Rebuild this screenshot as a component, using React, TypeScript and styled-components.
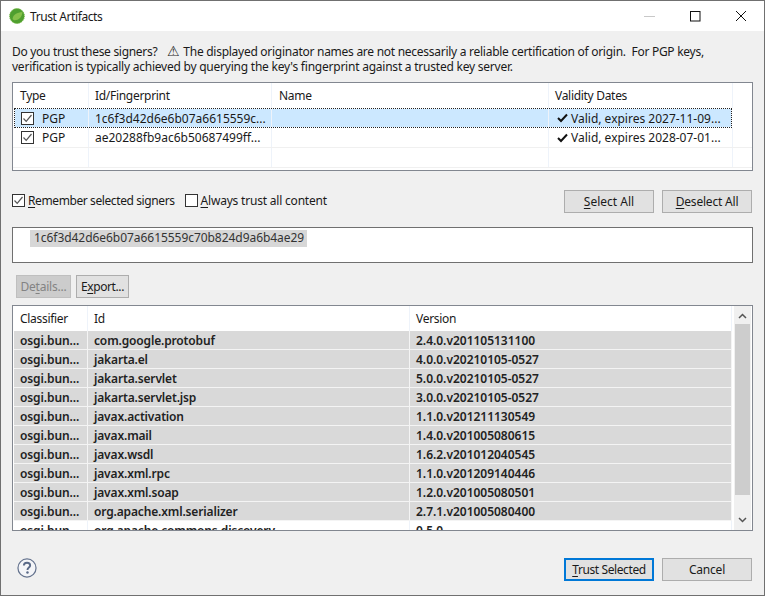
import React from "react";
import styled, { createGlobalStyle, css } from "styled-components";

const Global = createGlobalStyle`
  html, body { margin: 0; padding: 0; background: #f0f0f0; }
  body { font-family: "Noto Sans", "Open Sans", sans-serif; font-size: 12px; color: #1a1a1a; }
  #root { width: 765px; height: 596px; }
  u { text-underline-offset: 2px; }
`;

const Win = styled.div`
  box-sizing: border-box; width: 765px; height: 596px;
  border: 1px solid #707070; background: #f0f0f0;
  display: flex; flex-direction: column; overflow: hidden;
`;
const TitleBar = styled.div`
  height: 30px; background: #fff; display: flex; align-items: center; flex: none;
  padding-left: 8px;
`;
const TitleText = styled.span`
  font-size: 12px; margin-left: 5px; letter-spacing: -0.4px; flex: 1;
`;
const WinBtn = styled.div`
  width: 46px; height: 30px; display: flex; align-items: center; justify-content: center; flex: none;
`;
const Body = styled.div`
  flex: 1; display: flex; flex-direction: column; padding: 12px 11px 0 11px; min-height: 0;
`;
const Intro = styled.div`
  line-height: 15px; height: 30px; white-space: pre; margin-top: 1px;
`;
const Lead = styled.span`letter-spacing: -0.3px; margin-right: 10px;`;
const Warn = styled.span`margin-right: 3px; font-size: 14px; line-height: 14px;`;
const Spaced = styled.span<{ $s: number }>`letter-spacing: ${p => p.$s}px;`;
const Table = styled.div<{ $h: number; $mt?: number }>`
  box-sizing: border-box; height: ${p => p.$h}px; margin-top: ${p => p.$mt ?? 7}px; border: 1px solid #828790;
  background: #fff; overflow: hidden; display: flex; flex-direction: column; flex: none;
`;
const Row = styled.div<{ $cols: string; $h: number; $gray?: boolean; $line?: boolean; $bold?: boolean; $head?: boolean }>`
  display: grid; grid-template-columns: ${p => p.$cols}; height: ${p => p.$h}px; flex: none;
  box-sizing: border-box;
  ${p => p.$line && css`border-bottom: 1px solid #f0f0f0;`}
  ${p => p.$gray && css`background: #d9d9d9; border-bottom: 1px solid #f4f4f4;`}
  ${p => p.$bold && css`font-weight: 600; color: #222;`}
  ${p => p.$head && css`letter-spacing: -0.3px;`}
`;
const SelectedRow = styled(Row)`
  background: #cce8ff; outline: 1px dotted #222; outline-offset: 0; margin: 1px 21px 1px 2px;
`;
const Cell = styled.div<{ $pad?: number; $gap?: number; $divider?: string; $s?: number }>`
  box-sizing: border-box; padding-left: ${p => p.$pad ?? 6}px; gap: ${p => p.$gap ?? 0}px;
  white-space: nowrap; overflow: hidden; display: flex; align-items: center;
  border-right: 1px solid ${p => p.$divider ?? "#eef3fa"};
  ${p => p.$s !== undefined && css`letter-spacing: ${p.$s}px;`}
`;
const Tick = styled.span`
  box-sizing: border-box; width: 13px; height: 13px; border: 1px solid #333; background: #fff;
  display: inline-flex; align-items: center; justify-content: center; flex: none;
`;
const CheckRow = styled.div`
  display: flex; align-items: center; height: 23px; margin-top: 19px; padding-right: 1px;
`;
const CheckLabel = styled.label<{ $s: number; $mr?: number }>`
  display: flex; align-items: center; gap: 3px; margin: -2px ${p => p.$mr ?? 0}px 0 0; letter-spacing: ${p => p.$s}px;
`;
const Spacer = styled.div`flex: 1;`;
const Btn = styled.div<{ $w?: number; $s?: number; $focus?: boolean; $disabled?: boolean }>`
  box-sizing: border-box; width: ${p => p.$w ?? 90}px; height: 23px; display: flex; align-items: center; justify-content: center;
  background: #e1e1e1; border: 1px solid #adadad; flex: none; letter-spacing: ${p => p.$s ?? 0}px;
  ${p => p.$focus && css`border: 2px solid #0078d7;`}
  ${p => p.$disabled && css`background: #cccccc; border-color: #bfbfbf; color: #838383;`}
`;
const BtnGap = styled.div`width: 8px; flex: none;`;
const DetailBox = styled.div`
  box-sizing: border-box; height: 36px; margin-top: 14px; background: #fff; border: 1px solid #707070;
  padding: 1px 0 0 17px; flex: none;
`;
const Selected = styled.span`
  display: inline-block; background: #d7d7d7; height: 17px; line-height: 15px; padding: 0 3px 0 4px; color: #333; letter-spacing: -0.05px;
`;
const SmallBtns = styled.div`display: flex; gap: 5px; margin-top: 12px; padding-left: 4px; flex: none;`;
const ListWrap = styled.div`display: flex; height: 100%; min-height: 0;`;
const ListCol = styled.div`width: 718px; margin-left: 1px; overflow: hidden; flex: none;`;
const Scroll = styled.div`
  width: 17px; margin: 0 1px 0 auto; background: #f0f0f0; display: flex; flex-direction: column; flex: none;
`;
const ScrollArrow = styled.div<{ $h: number; $pt?: number }>`
  box-sizing: border-box; height: ${p => p.$h}px; padding-top: ${p => p.$pt ?? 7}px; display: flex; justify-content: center; flex: none;
`;
const Thumb = styled.div`flex: 1; margin: 0 1px; background: #cdcdcd;`;
const Footer = styled.div`
  display: flex; align-items: center; margin-top: 27px; height: 23px; padding: 0 1px 0 5px; flex: none;
`;
const HelpIcon = styled.svg`margin-top: -3px; flex: none;`;
const ValidIcon = styled.svg`margin-right: 3px; flex: none;`;

const Check = () => (
  <svg width="11" height="11" viewBox="0 0 11 11"><path d="M1.5 5.5 L4.2 8.4 L9.5 2" fill="none" stroke="#555" strokeWidth="1.2" /></svg>
);
const Box = ({ on }: { on?: boolean }) => <Tick>{on && <Check />}</Tick>;
const Valid = () => (
  <ValidIcon width="11" height="10" viewBox="0 0 11 10"><path d="M1 5 L4 8 L10 1.5" fill="none" stroke="#111" strokeWidth="2" /></ValidIcon>
);

const c1 = "76px 183px 277px 184px 1fr";
const c1Sel = "74px 183px 277px 183px";
const c2 = "74px 322px 322px";

const rows = [
  ["com.google.protobuf", "2.4.0.v201105131100"],
  ["jakarta.el", "4.0.0.v20210105-0527"],
  ["jakarta.servlet", "5.0.0.v20210105-0527"],
  ["jakarta.servlet.jsp", "3.0.0.v20210105-0527"],
  ["javax.activation", "1.1.0.v201211130549"],
  ["javax.mail", "1.4.0.v201005080615"],
  ["javax.wsdl", "1.6.2.v201012040545"],
  ["javax.xml.rpc", "1.1.0.v201209140446"],
  ["javax.xml.soap", "1.2.0.v201005080501"],
  ["org.apache.xml.serializer", "2.7.1.v201005080400"],
];

export default function App() {
  return (
    <Win>
      <Global />
      <TitleBar>
        <svg width="16" height="16" viewBox="0 0 16 16">
          <circle cx="8" cy="8" r="7.4" fill="#4f9f2f" stroke="#6db33f" strokeWidth="1" strokeDasharray="1.2 0.8" />
          <path d="M3.5 11 C4 6.5 8 4.5 13.5 4 C13 9.5 9.5 12.5 5 12.2 Z" fill="#86c04a" />
        </svg>
        <TitleText>Trust Artifacts</TitleText>
        <WinBtn><svg width="11" height="1"><rect width="11" height="1" fill="#c8c8c8" /></svg></WinBtn>
        <WinBtn><svg width="11" height="11"><rect x="0.5" y="0.5" width="9.5" height="9.5" fill="none" stroke="#111" /></svg></WinBtn>
        <WinBtn><svg width="12" height="12"><path d="M1 1 L11 11 M11 1 L1 11" stroke="#111" /></svg></WinBtn>
      </TitleBar>
      <Body>
        <Intro>
          <Lead>Do you trust these signers?</Lead>
          <Warn>⚠</Warn>
          <Spaced $s={-0.27}>{"The displayed originator names are not necessarily a reliable certification of origin.  For PGP keys,"}</Spaced>
          {"\n"}
          <Spaced $s={-0.23}>{"verification is typically achieved by querying the key's fingerprint against a trusted key server."}</Spaced>
        </Intro>
        <Table $h={89} $mt={8}>
          <Row $cols={c1} $h={25} $head>
            <Cell $pad={7}>Type</Cell><Cell>Id/Fingerprint</Cell><Cell $pad={7}>Name</Cell><Cell>Validity Dates</Cell><Cell $divider="transparent" />
          </Row>
          <SelectedRow $cols={c1Sel} $h={18}>
            <Cell $pad={6} $gap={8}><Box on />PGP</Cell>
            <Cell>1c6f3d42d6e6b07a6615559c...</Cell><Cell /><Cell $pad={8}><Valid />Valid, expires 2027-11-09...</Cell>
          </SelectedRow>
          <Row $cols={c1} $h={20} $line>
            <Cell $pad={8} $gap={8}><Box on />PGP</Cell>
            <Cell>ae20288fb9ac6b50687499ff...</Cell><Cell /><Cell $pad={8}><Valid />Valid, expires 2028-07-01...</Cell><Cell $divider="transparent" />
          </Row>
          <Row $cols={c1} $h={20} $line>
            <Cell /><Cell /><Cell /><Cell /><Cell $divider="transparent" />
          </Row>
        </Table>
        <CheckRow>
          <CheckLabel $s={-0.4} $mr={10}><Box on /><span><u>R</u>emember selected signers</span></CheckLabel>
          <CheckLabel $s={-0.2}><Box /><span><u>A</u>lways trust all content</span></CheckLabel>
          <Spacer />
          <Btn><span><u>S</u>elect All</span></Btn>
          <BtnGap />
          <Btn $s={-0.2}><span><u>D</u>eselect All</span></Btn>
        </CheckRow>
        <DetailBox><Selected>1c6f3d42d6e6b07a6615559c70b824d9a6b4ae29</Selected></DetailBox>
        <SmallBtns>
          <Btn $w={55} $s={-0.2} $disabled><span>De<u>t</u>ails...</span></Btn>
          <Btn $w={53} $s={-0.4}><span>E<u>x</u>port...</span></Btn>
        </SmallBtns>
        <Table $h={226}>
          <ListWrap>
            <ListCol>
              <Row $cols={c2} $h={25} $head>
                <Cell>Classifier</Cell><Cell>Id</Cell><Cell>Version</Cell>
              </Row>
              {rows.map(([id, v]) => (
                <Row key={id} $cols={c2} $h={19} $gray $bold>
                  <Cell $divider="#f4f4f4" $s={-0.1}>osgi.bun...</Cell>
                  <Cell $divider="#f4f4f4" $s={-0.15}>{id}</Cell>
                  <Cell $divider="#f4f4f4" $s={-0.02}>{v}</Cell>
                </Row>
              ))}
              <Row $cols={c2} $h={19} $bold>
                <Cell $s={-0.1}>osgi.bun...</Cell><Cell $s={-0.15}>org.apache.commons.discovery</Cell><Cell>0.5.0</Cell>
              </Row>
            </ListCol>
            <Scroll>
              <ScrollArrow $h={18}><svg width="9" height="6"><path d="M1 5 L4.5 1.5 L8 5" fill="none" stroke="#555" strokeWidth="1.5" /></svg></ScrollArrow>
              <Thumb />
              <ScrollArrow $h={35} $pt={22}><svg width="9" height="6"><path d="M1 1 L4.5 4.5 L8 1" fill="none" stroke="#555" strokeWidth="1.5" /></svg></ScrollArrow>
            </Scroll>
          </ListWrap>
        </Table>
        <Footer>
          <HelpIcon width="20" height="20" viewBox="0 0 21 21">
            <circle cx="10.5" cy="10.5" r="9.5" fill="#f4f5f8" stroke="#66748f" strokeWidth="1.3" />
            <path d="M7.2 8 C7.2 5.8 8.7 5 10.5 5 C12.4 5 13.8 6 13.8 7.8 C13.8 10 11 10 11 12.5" fill="none" stroke="#5a6a88" strokeWidth="2" />
            <circle cx="11" cy="15.3" r="1.3" fill="#5a6a88" />
          </HelpIcon>
          <Spacer />
          <Btn $focus $s={-0.4}><span><u>T</u>rust Selected</span></Btn>
          <BtnGap />
          <Btn $s={-0.2}>Cancel</Btn>
        </Footer>
      </Body>
    </Win>
  );
}
